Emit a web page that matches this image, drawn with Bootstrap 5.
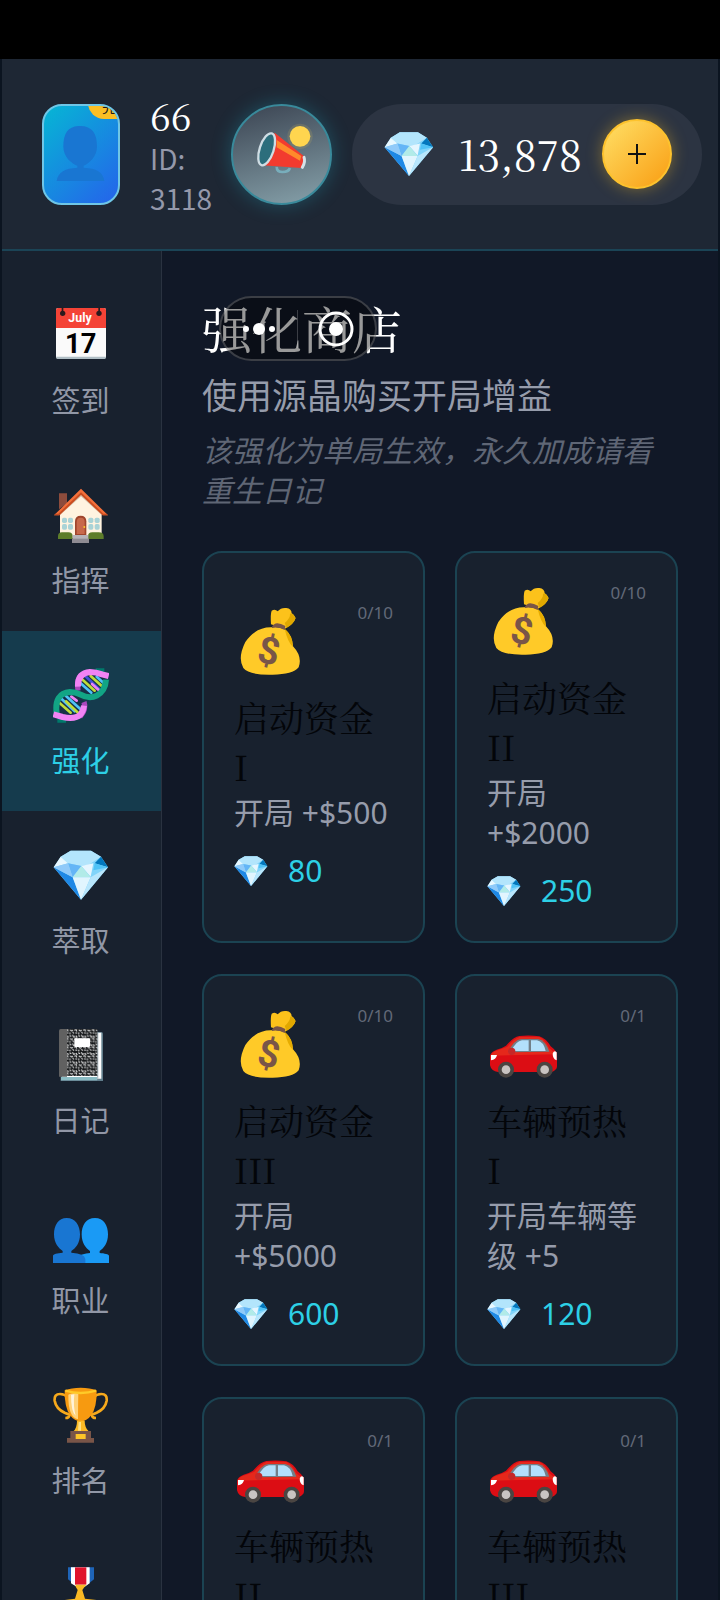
<!DOCTYPE html>
<html lang="zh-CN" data-bs-theme="dark">
<head>
<meta charset="utf-8">
<meta name="viewport" content="width=device-width, initial-scale=1">
<title>强化商店</title>
<link href="https://cdn.jsdelivr.net/npm/bootstrap@5.3.0/dist/css/bootstrap.min.css" rel="stylesheet">
<style>
  :root { --ui: "Noto Sans", "Noto Sans CJK SC", sans-serif; --cjk: "Noto Sans CJK SC", sans-serif; --song: "Noto Serif CJK SC", "Liberation Serif", "Noto Sans CJK SC", serif; }
  body { background: #0b1420; font-family: var(--ui); font-size: 30px; line-height: 40px; color: #9ca3af; }
  svg { display: block; flex: none; }
  .app { height: 100vh; overflow: hidden; padding: 0 2px; }
  .statusbar { height: 59px; background: #000; margin: 0 -2px; flex: none; }
  .topbar { background: #1e2734; border-bottom: 2px solid #1b4456; padding: 30px 16px 30px 40px; height: 192px; flex: none; }
  .avatar { width: 78px; height: 101px; border: 2px solid #6fc6e6; border-radius: 20px; background: linear-gradient(135deg, #06b6d4, #2563eb); overflow: hidden; padding: 0; flex: none; }
  .avatar-tag { top: -20px; left: 44px; width: 60px; height: 33px; border-radius: 16px; background: #fbbf24; color: #1b1b1b; font: 15px/24px var(--cjk); padding: 8px 0 0 14px; text-align: left; white-space: nowrap; }
  .who { font-family: var(--cjk); font-size: 28px; margin-left: 30px; padding-top: 2px; color: #9498aa; }
  .who-name { font-family: var(--song); font-size: 37px; line-height: 46px; color: #fff; }
  .notice { width: 101px; height: 101px; padding: 0; border: 2px solid #398a9b; background: linear-gradient(165deg, #3b4452, #86a1aa); box-shadow: 0 0 20px rgba(34, 211, 238, .25); flex: none; }
  .wallet { height: 101px; border-radius: 50px; background: #2c3442; padding: 0 30px 0 32px; margin-left: 20px; color: #fff; font-family: var(--song); font-size: 41px; }
  .wallet-sum { margin: 0 20px 0 24px; }
  .plus { width: 70px; height: 70px; padding: 0; border: 2px solid #fdc22d; background: linear-gradient(135deg, #ffe066, #f99d12); box-shadow: 0 0 16px rgba(251, 191, 36, .4); }
  .side { width: 160px; background: #18212e; border-right: 1px solid #2a3240; padding-top: 20px; flex: none; overflow: hidden; }
  .side-item { height: 180px; padding: 36px 2px 32px 0; gap: 16px; color: #9197a6; text-decoration: none; font-family: var(--cjk); font-size: 29px; flex: none; }
  .side-item.active { background: #153b4d; color: #2dd0e6; }
  .shop { background: #111827; padding: 40px; overflow: hidden; min-width: 0; }
  .shop-title { font-family: var(--song); font-size: 50px; line-height: 72px; color: #fff; margin: 0; font-weight: 400; }
  .shop-lead { font-family: var(--cjk); font-size: 35px; line-height: 50px; margin: 6px 0 10px; color: #969cab; }
  .shop-note { font-family: var(--cjk); font-style: italic; margin: 0 0 42px; color: #5f6675; }
  .capsule { left: 17px; top: 5px; width: 158px; height: 65px; border: 2px solid rgba(255, 255, 255, .2); border-radius: 33px; background: rgba(0, 0, 0, .4); }
  .capsule button { height: 100%; background: none; border: 0; padding: 0; }
  .capsule-line { width: 1px; height: 38px; background: rgba(255, 255, 255, .2); }
  .goods { display: grid; grid-template-columns: 1fr 1fr; grid-auto-rows: 392px; gap: 31px 30px; }
  .item { background: #18212e; border: 2px solid #1b4352; border-radius: 20px; padding: 0 30px; text-align: left; color: #969cab; min-width: 0; }
  .item-top { height: 90px; padding-top: 4px; }
  .count { font-size: 17px; line-height: 12px; color: #626978; }
  .item-name { font-family: var(--song); font-size: 35px; line-height: 49px; color: #030509; }
  .item-info { padding-top: 2px; }
  .price { gap: 20px; margin-top: 18px; color: #2dd0e6; }
</style>
</head>
<body>
<svg width="0" height="0" class="position-absolute" aria-hidden="true">
  <symbol id="calendar" viewBox="159 171 168 168">
    <rect x="168" y="174" width="150" height="152" rx="6" fill="#fafafa"/><path d="M168 321v-1h150v1q0 6-6 6H174q-6 0-6-6z" fill="#b0bec5"/>
    <path d="M168 234v-54q0-6 6-6h138q6 0 6 6v54z" fill="#f44336"/>
    <g fill="#2b1a1d"><circle cx="188" cy="190" r="8"/><circle cx="297" cy="190" r="8"/><path d="M185 172h5v18h-5zM295 172h5v18h-5z"/></g>
    <text x="240" y="217" text-anchor="middle" font-family="Roboto" font-weight="700" font-size="37" fill="#fff">July</text>
    <text x="242" y="309" text-anchor="middle" font-family="Roboto" font-weight="700" font-size="82" fill="#000">17</text>
  </symbol>
  <symbol id="house" viewBox="159 711 168 168">
    <path d="M177 730h24v30l-24 18z" fill="#8d4c3c"/><path d="M180 790l63-58 62 58v74H180z" fill="#fff3e0"/>
    <path d="M180 795l63-56 62 56v-14l-62-54-63 54z" fill="#ccb8a3"/>
    <path d="M243 716l81 80h-16l-65-62-65 62h-16z" fill="#f4703a"/><path d="M162 796h16l65-62 65 62h16l-4-5h-10l-67-64-68 64h-9z" fill="#c84c20"/>
    <g fill="#a9d3d6"><rect x="186" y="803" width="15" height="16" rx="5"/><rect x="204" y="803" width="15" height="16" rx="5"/><rect x="186" y="822" width="15" height="17" rx="5"/><rect x="204" y="822" width="15" height="17" rx="5"/><rect x="265" y="803" width="15" height="16" rx="5"/><rect x="284" y="803" width="15" height="16" rx="5"/><rect x="265" y="822" width="15" height="17" rx="5"/><rect x="284" y="822" width="15" height="17" rx="5"/></g>
    <path d="M225 856v-42q0-17 17-17t17 17v42z" fill="#a0452c"/><path d="M230 852v-36q0-13 12-13t12 13v36z" fill="#c8694b"/><circle cx="253" cy="831" r="3" fill="#ffca28"/>
    <path d="M174 867v-8q0-12 12-12h19q13 0 13 12v8zM264 867v-8q0-12 13-12h19q15 0 15 12v8z" fill="#5d7d2a"/>
    <path d="M218 855h47v12h-47z" fill="#b7b3b8"/><path d="M216 866h51v15h-51z" fill="#8f8c93"/>
  </symbol>
  <symbol id="dna" viewBox="159 141 168 168">
    <path d="M287 145h26v22h-26zM172 290h26v18h-26z" fill="#00796b"/>
    <path d="M235 205q-6-30 20-43 30-10 60 5 8 30-16 62-20 10-48-8zM172 275q-4-38 20-58l48 14q20 16 12 44-16 24-52 20z" fill="#173047"/>
    <g stroke-width="8" stroke-linecap="round"><path d="M242 190l32 28" stroke="#4fc3f7"/><path d="M246 178l38 34" stroke="#c0dc39"/><path d="M258 170l40 38" stroke="#3f51d8"/><path d="M272 168l34 31" stroke="#c0dc39"/><path d="M276 192l20 18" stroke="#ee82f5"/><path d="M290 170l20 18" stroke="#4fc3f7"/>
    <path d="M178 248l34 30" stroke="#c0dc39"/><path d="M182 234l42 40" stroke="#4fc3f7"/><path d="M198 244l36 34" stroke="#c0dc39"/><path d="M198 228l42 38" stroke="#4fc3f7"/><path d="M214 230l16 12" stroke="#ee82f5"/></g>
    <path d="M234 212q-5-34 10-48M252 246q8 22-12 44" fill="none" stroke="#ab47bc" stroke-width="16"/>
    <path d="M170 280q-8-60 40-64 16 0 32 8 26 14 48 3 26-14 28-48" fill="none" stroke="#12a585" stroke-width="18"/>
    <path d="M234 200q-2-40 36-44 18 0 36 7l20 5M160 283l28 8q38 8 54-8 8-10 10-26" fill="none" stroke="#f283f4" stroke-width="18"/>
  </symbol>
  <symbol id="diamond" viewBox="159 681 168 168">
    <path d="M212 692h61l30 18 21 32-81 97-82-97 21-32z" fill="#81d4fa"/>
    <path d="M212 692h61l30 18-37 24-22 4-40-8-22-20z" fill="#b3e5fc"/>
    <path d="M182 710l22 20-43 12z" fill="#e8f8ff"/><path d="M303 710l21 32-40-12z" fill="#0277bd"/><path d="M284 730l40 12-44 9z" fill="#4fc3f7"/>
    <path d="M204 730l40 8-26 34z" fill="#64b5f6"/><path d="M280 730l-36 8 28 32z" fill="#e6f6ff"/><path d="M244 738l28 34h-54z" fill="#b2ebe8"/>
    <path d="M161 742l57 30 25 67z" fill="#1e88e5"/><path d="M161 742l43-12 14 42z" fill="#90caf9"/><path d="M218 772h54l-29 67z" fill="#e1f5fe"/><path d="M272 772l52-30-81 97z" fill="#b8e6fc"/>
  </symbol>
  <pattern id="marble" width="26" height="26" patternUnits="userSpaceOnUse"><rect width="26" height="26" fill="#16181a"/><path d="M1 2l5 3M10 1l3 6 5-2M20 3l4 6M2 11l5 4 4-3M15 12l5-1 3 5M3 19l-1 5M10 18l4 4M18 20l6 1" stroke="#f4f4f4" stroke-width="3" fill="none"/></pattern>
  <symbol id="notebook" viewBox="159 81 168 168">
    <path d="M182 96h122q5 0 5 5v142H182z" fill="#607d8b"/><path d="M186 98h118v138H186z" fill="#fff"/><path d="M183 231h108v10H183z" fill="#8bbcc4"/><path d="M291 98h4v140h-4z" fill="#b0bec5"/>
    <path d="M200 87h92v141H200z" fill="url(#marble)"/><path d="M182 87h19v143h-24V92q0-5 5-5z" fill="#616161"/><rect x="223" y="115" width="47" height="26" rx="3" fill="#fff"/>
  </symbol>
  <symbol id="people" viewBox="159 621 168 168">
    <path d="M285 654c26 0 39 22 39 49s-13 42-25 50v6c14 1 28 4 28 8v22h-90v-20q8-8 33-10v-6c-12-8-25-23-25-50s13-49 40-49z" fill="#1a9af5"/>
    <path d="M200 654c26 0 40 22 40 49s-13 42-26 50v5q40 2 42 19v12h-97v-22c0-5 13-8 29-9v-5c-12-8-26-23-26-50s13-49 38-49z" fill="#1976d2"/>
  </symbol>
  <symbol id="trophy" viewBox="159 261 168 168">
    <path d="M204 292q-10-10-24-10-18 0-16 20 4 24 30 36l14 6q0 10-12 10M280 292q10-10 24-10 18 0 16 20-4 24-30 36l-14 6q0 10 12 10" fill="none" stroke="#f6a91c" stroke-width="8"/>
    <path d="M194 271q20-8 48-8t48 8q1 50-16 75-14 18-32 18t-32-18q-17-25-16-75z" fill="#f79a10"/><path d="M205 284q8-5 30-6-1 40-1 80-30-6-29-74z" fill="#ffd27a"/><path d="M213 284l10-1q-4 36 4 64-14-12-14-63z" fill="#fff3da"/><path d="M196 272q46 14 92 0" fill="none" stroke="#ffca28" stroke-width="7"/>
    <path d="M231 362h23q0 20 12 32h-46q11-10 11-32z" fill="#fbb924"/><path d="M236 366h7v26h-9z" fill="#ffe082"/>
    <path d="M211 393h62v21h9v14h-81v-14h10z" fill="#795548"/><path d="M227 402h30v15h-30z" fill="#fdc529"/>
  </symbol>
  <symbol id="medal" viewBox="159 801 168 168">
    <path d="M204 802h78v36l-30 24h-18l-30-24z" fill="#1e64b8"/><path d="M213 802h56v48l-15 10h-24l-17-10z" fill="#fff"/><path d="M225 802h34v52h-34z" fill="#e0142c"/>
    <path d="M227 854h32l-5 6-7 10 8 26 52 6-40 30 12 34-36-20-36 20 12-34-40-30 46-6 8-26-6-10z" fill="#fbb924"/>
  </symbol>
  <symbol id="bag" viewBox="132 204 210 210">
    <path d="M243 256q-2-32 2-41 10-6 18 2 10-12 26-10 16 2 16 16 10 6 12 14-4 16-32 32z" fill="#fcc21b"/><path d="M284 252q18-16 16-28 10-4 16 14-6 20-26 28z" fill="#e0a800"/>
    <path d="M246 265q-48-2-80 44-24 48-6 78 18 22 88 20 60 0 78-22 12-32-17-63-2-32-22-50-20-10-41-7z" fill="#ffca28"/><path d="M284 270q24 18 25 54-16-14-25-54z" fill="#e6ac00"/>
    <path d="M246 263q10-20 40-2l-2 12q-20-10-38-6z" fill="#795548"/>
    <text x="237" y="374" text-anchor="middle" transform="rotate(12 237 334)" font-family="Roboto" font-weight="700" font-size="112" fill="#795548">$</text>
  </symbol>
  <symbol id="car" viewBox="891 153 210 210">
    <path d="M900 290q3-12 20-18 16-4 28-12 22-26 40-29 32-3 60 1 20 6 34 30 12 8 20 22 1 30-2 44-8 12-20 11H924q-20-2-24-20z" fill="#dc0d14"/><path d="M904 288q4-10 20-14l28-11q20-24 36-29h60q18 8 30 34l22 18-198 4z" fill="#e5281b"/>
    <path d="M954 280q18-38 40-40h50q22 4 34 38z" fill="#727f88"/><path d="M964 276q14-30 32-32h20v32zM1023 244h18q20 4 26 32h-44z" fill="#b3e0fb"/>
    <circle cx="965" cy="277" r="11" fill="#c62828"/><path d="M903 288h18q-3 14-18 16zM1088 284q4-12 12-4v24q-12-4-12-20z" fill="#fff"/>
    <g fill="#4a4542"><circle cx="948" cy="332" r="24"/><circle cx="1064" cy="332" r="24"/></g><g fill="#c9c4c2"><circle cx="948" cy="332" r="13"/><circle cx="1064" cy="332" r="13"/></g>
  </symbol>
</svg>

<div class="app d-flex flex-column">
  <div class="statusbar"></div>
  <header class="topbar d-flex align-items-center">
    <button class="avatar position-relative" type="button" aria-label="头像">
      <svg viewBox="132 168 222 291" width="74" height="97"><path d="M235 228c42-2 56 22 56 62 0 30-24 50-40 57v6c38 2 58 12 62 40H170c4-28 26-38 62-40v-6c-18-7-42-27-42-57 0-40 14-60 45-62z" fill="#1976d2"/></svg>
      <span class="avatar-tag position-absolute">完善</span>
    </button>
    <div class="who flex-grow-1"><div class="who-name">66</div><div>ID:<br>3118</div></div>
    <button class="notice rounded-circle" type="button" aria-label="公告">
      <svg viewBox="705 168 291 291" width="97" height="97">
        <circle cx="906" cy="259" r="38" fill="#ffd54f" opacity=".12"/>
        <path d="M836 350q0 16 18 16t22-12" fill="none" stroke="#78aebc" stroke-width="8"/>
        <path d="M830 248l90 72q-2 26-10 34l-118-8z" fill="#f23b2f"/><path d="M836 270l74 48-4 14-70-40z" fill="#ff8a2b"/>
        <ellipse cx="806" cy="298" rx="21" ry="50" transform="rotate(18 806 298)" fill="#2c6e7c" stroke="#cfdde4" stroke-width="7"/>
        <path d="M918 322q5 14-5 30" fill="none" stroke="#d5e1e7" stroke-width="9" stroke-linecap="round"/>
        <circle cx="906" cy="259" r="31" fill="#ffd54f"/>
      </svg>
    </button>
    <div class="wallet d-flex align-items-center">
      <svg width="50" height="50"><use href="#diamond"/></svg>
      <span class="wallet-sum">13,878</span>
      <button class="plus rounded-circle d-flex align-items-center justify-content-center" type="button" aria-label="充值"><svg width="18" height="20" viewBox="0 0 18 20"><path d="M0 10h18M9 0v20" stroke="#111" stroke-width="2"/></svg></button>
    </div>
  </header>

  <div class="d-flex flex-grow-1 overflow-hidden">
    <nav class="side d-flex flex-column">
      <a class="side-item d-flex flex-column align-items-center" href="#"><svg width="56" height="56"><use href="#calendar"/></svg>签到</a>
      <a class="side-item d-flex flex-column align-items-center" href="#"><svg width="56" height="56"><use href="#house"/></svg>指挥</a>
      <a class="side-item active d-flex flex-column align-items-center" href="#" aria-current="page"><svg width="56" height="56"><use href="#dna"/></svg>强化</a>
      <a class="side-item d-flex flex-column align-items-center" href="#"><svg width="56" height="56"><use href="#diamond"/></svg>萃取</a>
      <a class="side-item d-flex flex-column align-items-center" href="#"><svg width="56" height="56"><use href="#notebook"/></svg>日记</a>
      <a class="side-item d-flex flex-column align-items-center" href="#"><svg width="56" height="56"><use href="#people"/></svg>职业</a>
      <a class="side-item d-flex flex-column align-items-center" href="#"><svg width="56" height="56"><use href="#trophy"/></svg>排名</a>
      <a class="side-item d-flex flex-column align-items-center" href="#" aria-label="成就"><svg width="56" height="56"><use href="#medal"/></svg></a>
    </nav>

    <main class="shop flex-grow-1">
      <div class="position-relative">
        <h1 class="shop-title">强化商店</h1>
        <div class="capsule position-absolute d-flex align-items-center">
          <button class="flex-fill d-flex align-items-center justify-content-center" type="button" aria-label="更多"><svg width="34" height="12" viewBox="0 0 34 12" fill="#fff"><circle cx="4" cy="6" r="3"/><circle cx="17" cy="6" r="6"/><circle cx="30" cy="6" r="3"/></svg></button>
          <span class="capsule-line"></span>
          <button class="flex-fill d-flex align-items-center justify-content-center" type="button" aria-label="关闭"><svg width="36" height="36" viewBox="0 0 36 36"><circle cx="18" cy="18" r="16" fill="none" stroke="#fff" stroke-width="3"/><circle cx="18" cy="18" r="7" fill="#fff"/></svg></button>
        </div>
      </div>
      <p class="shop-lead">使用源晶购买开局增益</p>
      <p class="shop-note">该强化为单局生效，永久加成请看重生日记</p>

      <div class="goods">
        <button class="item d-flex flex-column justify-content-center" type="button">
          <span class="item-top d-flex justify-content-between w-100"><svg width="70" height="70"><use href="#bag"/></svg><span class="count">0/10</span></span>
          <span class="item-name">启动资金<br>I</span><span class="item-info">开局 +$500</span>
          <span class="price d-flex align-items-center"><svg width="34" height="34"><use href="#diamond"/></svg>80</span>
        </button>
        <button class="item d-flex flex-column justify-content-center" type="button">
          <span class="item-top d-flex justify-content-between w-100"><svg width="70" height="70"><use href="#bag"/></svg><span class="count">0/10</span></span>
          <span class="item-name">启动资金<br>II</span><span class="item-info">开局<br>+$2000</span>
          <span class="price d-flex align-items-center"><svg width="34" height="34"><use href="#diamond"/></svg>250</span>
        </button>
        <button class="item d-flex flex-column justify-content-center" type="button">
          <span class="item-top d-flex justify-content-between w-100"><svg width="70" height="70"><use href="#bag"/></svg><span class="count">0/10</span></span>
          <span class="item-name">启动资金<br>III</span><span class="item-info">开局<br>+$5000</span>
          <span class="price d-flex align-items-center"><svg width="34" height="34"><use href="#diamond"/></svg>600</span>
        </button>
        <button class="item d-flex flex-column justify-content-center" type="button">
          <span class="item-top d-flex justify-content-between w-100"><svg width="70" height="70"><use href="#car"/></svg><span class="count">0/1</span></span>
          <span class="item-name">车辆预热<br>I</span><span class="item-info">开局车辆等级 +5</span>
          <span class="price d-flex align-items-center"><svg width="34" height="34"><use href="#diamond"/></svg>120</span>
        </button>
        <button class="item d-flex flex-column justify-content-start pt-4" type="button">
          <span class="item-top d-flex justify-content-between w-100 mt-2"><svg width="70" height="70"><use href="#car"/></svg><span class="count">0/1</span></span>
          <span class="item-name">车辆预热<br>II</span>
        </button>
        <button class="item d-flex flex-column justify-content-start pt-4" type="button">
          <span class="item-top d-flex justify-content-between w-100 mt-2"><svg width="70" height="70"><use href="#car"/></svg><span class="count">0/1</span></span>
          <span class="item-name">车辆预热<br>III</span>
        </button>
      </div>
    </main>
  </div>
</div>
<script src="https://cdn.jsdelivr.net/npm/bootstrap@5.3.0/dist/js/bootstrap.bundle.min.js"></script>
</body>
</html>
